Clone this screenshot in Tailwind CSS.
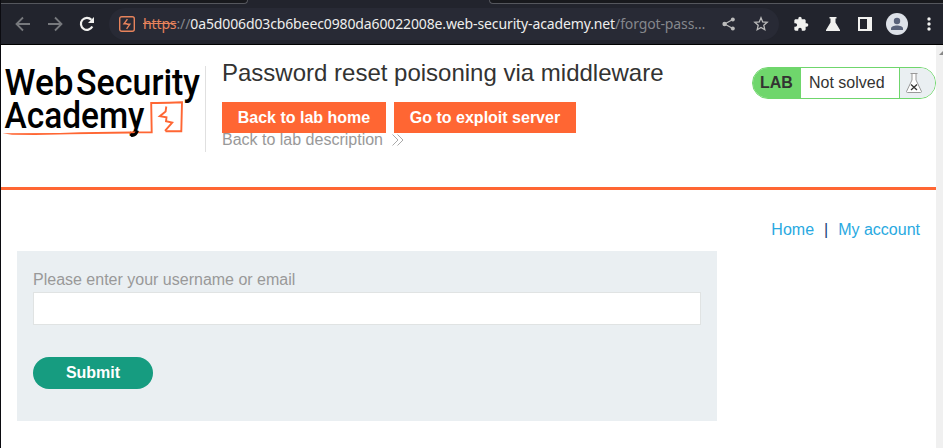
<!DOCTYPE html>
<html lang="en">
<head>
<meta charset="utf-8">
<title>Password reset poisoning via middleware</title>
<script src="https://cdn.jsdelivr.net/npm/@tailwindcss/browser@4"></script>
</head>
<body class="w-[943px] h-[448px] overflow-hidden bg-white font-['Liberation_Sans',Arial,sans-serif] text-base text-[#333332] flex flex-col">
  <!-- Browser chrome -->
  <div class="h-[45px] shrink-0 bg-[#22242d] border-b border-black flex flex-col border-l border-l-[#0b0b10]">
    <div class="h-1 shrink-0 flex justify-between">
      <div class="w-[247px] bg-[#18191d] border-b border-r border-[#55575d] rounded-br-[4px]"></div>
      <div class="w-[454px] bg-[#18191d] border-b border-l border-[#55575d] rounded-bl-[4px]"></div>
    </div>
    <div class="flex items-center h-10 pl-[14px]">
      <svg class="w-4 h-4" viewBox="0 0 16 16" fill="none" stroke="#77797d" stroke-width="1.8"><path d="M15 8H2M8 1.5L1.5 8L8 14.5"/></svg>
      <svg class="w-4 h-4 ml-4" viewBox="0 0 16 16" fill="none" stroke="#77797d" stroke-width="1.8"><path d="M1 8H14M8 1.5L14.5 8L8 14.5"/></svg>
      <svg class="w-4 h-4 ml-4" viewBox="0 0 16 16" fill="none" stroke="#f1f1ef" stroke-width="2.2"><path d="M13.3 10.5A6 6 0 1 1 12.4 3.8"/><path d="M15 1V7H9Z" fill="#f1f1ef" stroke="none"/></svg>
      <div class="ml-[14px] w-[670px] h-8 rounded-full bg-[#282a35] flex items-center pl-[10px]">
        <svg class="w-4 h-4 shrink-0" viewBox="0 0 16 16" fill="none" stroke="#e7835c"><rect x=".7" y=".7" width="14.6" height="14.6" rx="2" stroke-width="1.4"/><path d="M8.400 3.200L5 7.800H7.600V8.600M7.600 12.800L10.800 8.300H8.400V7.400" stroke-width="1.400"/></svg>
        <div class="ml-2 w-[566px] whitespace-nowrap font-['Noto_Sans',sans-serif] text-[14px] tracking-[-0.124px] leading-5 text-[#eeeeed]"><span class="text-[#e7835c] line-through">https</span><span class="text-[#85878c]">://</span>0a5d006d03cb6beec0980da60022008e.web-security-academy.net<span class="text-[#85878c]">/forgot-pass…</span></div>
        <svg class="w-[14px] h-[14px] ml-[13px] shrink-0" viewBox="0 0 14 14" fill="#bcbcbc"><circle cx="2.6" cy="7" r="2.2"/><circle cx="10.8" cy="2.4" r="2"/><circle cx="10.8" cy="11.6" r="2"/><path d="M10.8 2.4L2.6 7L10.8 11.6" fill="none" stroke="#bcbcbc" stroke-width="1.2"/></svg>
        <svg class="w-4 h-4 ml-[17px] shrink-0" viewBox="0 0 16 16" fill="none" stroke="#bcbcbc" stroke-width="1.3"><path d="M8 1.8L9.7 5.9L14.2 6.3L10.8 9.3L11.8 13.7L8 11.4L4.2 13.7L5.2 9.3L1.8 6.3L6.3 5.9Z"/></svg>
      </div>
      <svg class="w-4 h-4 ml-[14px] shrink-0" viewBox="0 0 24 24" fill="#f1f1ef"><path d="M20.5 11H19V7c0-1.1-.9-2-2-2h-4V3.500a2.500 2.500 0 0 0-5 0V5H4C2.900 5 2 5.900 2 7v3.800h1.500a2.700 2.700 0 0 1 0 5.400H2V20c0 1.100.9 2 2 2h3.800v-1.500a2.700 2.700 0 0 1 5.400 0V22H17c1.100 0 2-.9 2-2v-4h1.500a2.500 2.500 0 0 0 0-5z"/></svg>
      <svg class="w-[14px] h-[14px] ml-[17px] shrink-0" viewBox="0 0 14 14" fill="#f1f1ef"><path d="M3.500 0H10.500V1.500H9.500V5.500L14 13V14H0V13L4.500 5.500V1.500H3.500Z"/></svg>
      <svg class="w-[14px] h-[14px] ml-[18px] shrink-0" viewBox="0 0 14 14"><path fill="#f1f1ef" fill-rule="evenodd" d="M0 0H14V14H0ZM2 2V12H9V2Z"/></svg>
      <svg class="w-[22px] h-[22px] ml-[14px] shrink-0" viewBox="0 0 22 22"><circle cx="11" cy="11" r="11" fill="#dde1e8"/><circle cx="11" cy="8" r="3.200" fill="#59627a"/><path d="M5 17V15.500C5 13.500 8 12.500 11 12.500S17 13.500 17 15.500V17Z" fill="#59627a"/></svg>
      <svg class="w-1 h-[14px] ml-[19px] shrink-0" viewBox="0 0 4 14" fill="#f1f1ef"><circle cx="2" cy="2" r="1.700"/><circle cx="2" cy="7" r="1.700"/><circle cx="2" cy="12" r="1.700"/></svg>
    </div>
  </div>

  <!-- Viewport -->
  <div class="flex flex-1 min-h-0 border-l border-[#0b0b10]">
    <div class="w-[935px] flex flex-col">
      <header class="h-[145px] shrink-0 border-b-[3px] border-[#ff6633] flex">
        <svg class="w-[204px] h-[110px] shrink-0" viewBox="1 45 204 110">
          <g class="font-[Roboto,sans-serif] font-medium" font-size="36.500" fill="#000">
            <text x="4.500" y="95.400" textLength="69" lengthAdjust="spacingAndGlyphs">Web</text>
            <text x="76" y="95.400" textLength="124" lengthAdjust="spacingAndGlyphs">Security</text>
            <text x="4.500" y="128.200" textLength="140" lengthAdjust="spacingAndGlyphs">Academy</text>
          </g>
          <g fill="none" stroke="#ff6633">
            <path d="M130 132.400L151.700 132.200L151.200 103Q166 103.200 182 102.300L181.300 131.300H165.500" stroke-width="1.900"/>
            <path d="M166.300 106.500L165.600 111.500L159.800 116.200L166.500 117.300L166 121.300L172.200 122.500L165 130.800" stroke-width="1.900"/>
          </g>
          <path d="M2.500 133.300L60 133L80 132.300L131 131.500V133.400L70 134.200L35 135L12 134.800Z" fill="#ff6633"/>
          <path d="M131 135.300Q135.500 136 137.500 130.500" fill="none" stroke="#000" stroke-width="3"/>
        </svg>
        <div class="mt-[21px] h-[86px] w-px bg-[#e0e0e0]"></div>
        <div class="ml-4 pt-[14px] w-[530px]">
          <h2 class="text-2xl leading-7">Password reset poisoning via middleware</h2>
          <div class="flex gap-2 mt-[15px] font-bold text-white leading-[31px]">
            <a class="bg-[#ff6633] w-[164px] h-[31px] text-center">Back to lab home</a>
            <a class="bg-[#ff6633] w-[182px] h-[31px] text-center">Go to exploit server</a>
          </div>
          <a class="flex items-center text-[#999999] leading-[18px] -mt-[2px]">Back to lab description
            <svg class="w-3 h-3 ml-[9px]" viewBox="0 0 12 12" fill="none" stroke="#aaa"><path d="M.5 .5L6 6L.5 11.500M5.500 .5L11 6L5.500 11.500"/></svg>
          </a>
        </div>
        <div class="mt-[22px] h-8 w-[184px] border border-[#6fd66c] rounded-full overflow-hidden flex leading-[30px]">
          <span class="w-12 pl-[7px] bg-[#6fd66c] font-bold">LAB</span>
          <span class="w-[99px] pl-2 border-r border-[#6fd66c]">Not solved</span>
          <span class="flex-1 bg-[#eaeff2] pl-[5px] pt-1">
            <svg class="w-[18px] h-[22px]" viewBox="0 0 18 22" fill="none"><path d="M5.500 1.500H12.500M7 2V8L1.500 19.500Q1.500 20.500 2.500 20.500H15.500Q16.500 20.500 16.500 19.500L11 8V2" fill="#fff" stroke="#999"/><path d="M6 12.500L12 18M12 12.500L6 18" stroke="#333332" stroke-width="1.300"/></svg>
          </span>
        </div>
      </header>
      <nav class="flex justify-end pr-4 pt-[31px] leading-[18px] text-[#29a9e1]">
        <a>Home</a><span class="mx-[10px] text-[#183d74]">|</span><a>My account</a>
      </nav>
      <form class="ml-4 mt-3 w-[700px] h-[170px] shrink-0 bg-[#eaeff2] px-4 pt-5">
        <label class="block leading-[18px] text-[#999999]">Please enter your username or email</label>
        <input type="text" class="block mt-[3px] w-full h-[33px] bg-white border border-[#e0e3e3]">
        <button type="button" class="mt-8 w-[120px] h-8 rounded-full bg-[#169c80] text-white font-bold">Submit</button>
      </form>
    </div>
    <div class="flex-1 bg-[#f0f0f0] overflow-hidden pt-1"><svg class="w-[9px] h-[7px] ml-[3px]" viewBox="0 0 9 7"><path d="M0 6L5 1L10 6Z" fill="#888"/></svg></div>
  </div>
</body>
</html>
